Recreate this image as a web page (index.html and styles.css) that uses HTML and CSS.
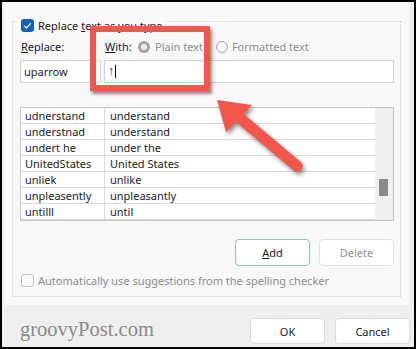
FILE: index.html
```html
<!DOCTYPE html>
<html>
<head>
<meta charset="utf-8">
<link rel="stylesheet" href="styles.css">
</head>
<body>
<div class="frame">
  <div class="panel">
    <div class="group">
      <div class="legend">
        <span class="check checked"><svg width="13" height="13" viewBox="0 0 13 13"><path d="M3.3 6.8 L5.4 8.9 L9.8 4.3" fill="none" stroke="#fff" stroke-width="1.2"/></svg></span>
        <span>Replace <u>t</u>ext as you type</span>
      </div>
      <div class="labels">
        <span class="lab-replace"><u>R</u>eplace:</span>
        <span class="lab-with"><u>W</u>ith:</span>
        <span class="radio on"></span><span class="dis">Plain text</span>
        <span class="radio off"></span><span class="dis">Formatted text</span>
      </div>
      <div class="inputs">
        <div class="field f-replace">uparrow</div>
        <div class="field f-with"><span class="glyph">↑</span><span class="caret"></span></div>
      </div>
      <div class="table">
        <div class="rows">
          <div class="row"><span class="c1">udnerstand</span><span class="c2">understand</span></div>
          <div class="row"><span class="c1">understnad</span><span class="c2">understand</span></div>
          <div class="row"><span class="c1">undert he</span><span class="c2">under the</span></div>
          <div class="row"><span class="c1">UnitedStates</span><span class="c2">United States</span></div>
          <div class="row"><span class="c1">unliek</span><span class="c2">unlike</span></div>
          <div class="row"><span class="c1">unpleasently</span><span class="c2">unpleasantly</span></div>
          <div class="row"><span class="c1">untilll</span><span class="c2">until</span></div>
        </div>
        <div class="scroll"><div class="thumb"></div></div>
      </div>
      <div class="actions">
        <div class="btn default"><u>A</u>dd</div>
        <div class="btn disabled">Delete</div>
      </div>
      <div class="auto">
        <span class="check empty"></span>
        <span class="dis">Automatically use suggestions from the spelling checker</span>
      </div>
    </div>
  </div>
  <div class="footer">
    <span class="brand">groovyPost.com</span>
    <div class="fbtns">
      <div class="btn fbtn">OK</div>
      <div class="btn fbtn">Cancel</div>
    </div>
  </div>
  <div class="highlight"></div>
  <svg class="arrow" width="416" height="349" viewBox="0 0 416 349">
    <g class="arrow-shape">
      <line x1="240" y1="118" x2="297" y2="166" stroke="#f3574c" stroke-width="11" stroke-linecap="round"/>
      <polygon points="217,100 226,132 252,105" fill="#f3574c"/>
    </g>
  </svg>
</div>
</body>
</html>
```

FILE: styles.css
```css
* { box-sizing: border-box; }
html, body { margin: 0; padding: 0; }
body {
  font-family: "Noto Sans", "Open Sans", sans-serif;
  font-size: 11px;
  color: #1b1b1b;
}
.frame {
  position: relative;
  width: 416px;
  height: 349px;
  border: 2px solid #000;
  background: #efefef;
  overflow: hidden;
}
.panel {
  margin-left: 2px;
  width: 405px;
  height: 303px;
  background: #f8f8f8;
  padding-top: 19px;
}
.group {
  margin: 0 8px;
  border: 1px dotted #cfcfcf;
  padding: 0 6px 8px 7px;
}
.legend {
  display: flex;
  align-items: center;
  width: fit-content;
  height: 14px;
  margin-top: -4px;
  margin-left: -4px;
  padding: 0 2px 0 5px;
  background: #f8f8f8;
}
.check {
  display: inline-block;
  width: 13px;
  height: 13px;
  border-radius: 3px;
  margin-right: 4px;
  flex: none;
}
.check svg { display: block; }
.check.checked { background: #1462b8; }
.check.empty { border: 1px solid #c4c4c4; background: #f8f8f8; }
.labels {
  display: flex;
  align-items: center;
  height: 15px;
  margin-top: 7px;
  padding-left: 1px;
}
.lab-replace { width: 84px; }
.lab-with { width: 33px; }
.dis { color: #8d8d8d; }
.radio {
  width: 12px;
  height: 12px;
  border-radius: 50%;
  margin-right: 5px;
  flex: none;
  position: relative;
}
.radio.on { background: #a3a3a3; }
.radio.on::after {
  content: "";
  position: absolute;
  left: 3px; top: 3px;
  width: 6px; height: 6px;
  border-radius: 50%;
  background: #ececec;
}
.radio.off {
  border: 1px solid #a5a5a5;
  margin-left: 13px;
  margin-right: 4px;
  background: #fafafa;
}
.inputs {
  display: flex;
  gap: 3px;
  margin-top: 6px;
  height: 23px;
}
.field {
  background: #fff;
  border: 1px solid #d2d2d2;
  height: 23px;
  display: flex;
  align-items: center;
  padding-left: 3px;
}
.f-replace { width: 81px; }
.f-with { flex: 1; }
.glyph {
  font-family: "Liberation Sans", "DejaVu Sans", sans-serif;
  font-size: 12px;
  line-height: 13px;
  color: #222;
}
.caret {
  display: inline-block;
  width: 1px;
  height: 13px;
  background: #000;
  margin-left: 1px;
}
.table {
  margin-top: 24px;
  border: 1px solid #c6c6c6;
  background: #fff;
  display: flex;
  height: 114px;
}
.rows { flex: 1; }
.row {
  display: flex;
  height: 16px;
  border-bottom: 1px solid #dadada;
  line-height: 15px;
  color: #222;
}
.c1 {
  width: 84px;
  border-right: 1px solid #dadada;
  padding-left: 4px;
}
.c2 { padding-left: 5px; }
.scroll {
  width: 18px;
  background: #f0f0f0;
  padding-top: 71px;
  padding-left: 4px;
}
.thumb {
  width: 9px;
  height: 17px;
  background: #898989;
  border-radius: 1px;
}
.actions {
  display: flex;
  justify-content: flex-end;
  gap: 9px;
  margin-top: 18px;
}
.btn {
  width: 75px;
  height: 27px;
  border-radius: 4px;
  background: #fff;
  display: flex;
  align-items: center;
  justify-content: center;
}
.btn.default { border: 1px solid #8fbde6; }
.btn.disabled { border: 1px solid #e2e2e2; color: #8f8f8f; }
.auto {
  display: flex;
  align-items: center;
  margin-top: 7px;
  padding-left: 1px;
}
.footer {
  display: flex;
  justify-content: space-between;
  align-items: center;
  padding: 13px 4px 0 18px;
}
.brand {
  font-family: "Liberation Serif", serif;
  font-size: 20.5px;
  color: #8a8a8a;
  margin-top: -4px;
}
.fbtns { display: flex; gap: 10px; }
.fbtn {
  height: 26px;
  border: 1px solid #dcdcdc;
}
.highlight {
  position: absolute;
  left: 88px;
  top: 24px;
  width: 120px;
  height: 65px;
  border: 6px solid #f3574c;
  box-shadow: 2px 3px 3px rgba(0,0,0,0.45);
}
.arrow {
  position: absolute;
  left: -2px;
  top: -2px;
  pointer-events: none;
}
.arrow-shape { filter: drop-shadow(2px 3px 2px rgba(0,0,0,0.45)); }
```
